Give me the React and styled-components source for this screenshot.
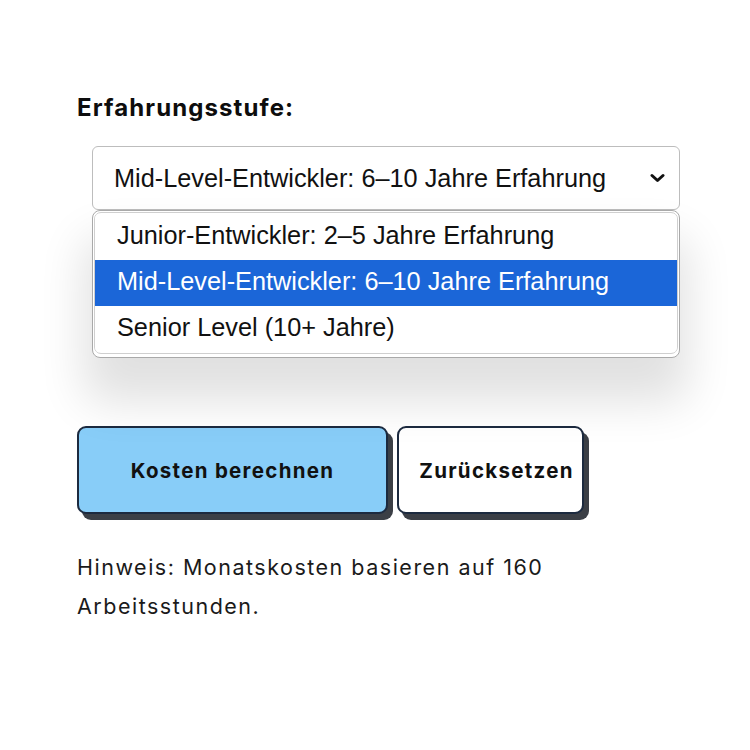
import React from "react";
import styled, { createGlobalStyle } from "styled-components";

const GlobalStyle = createGlobalStyle`
  html, body {
    margin: 0;
    padding: 0;
    background: #ffffff;
  }
  body {
    font-family: Inter, "Noto Sans", sans-serif;
    color: #111111;
  }
`;

const Page = styled.main`
  width: 603px;
  padding: 92px 0 0 77px;
  display: flex;
  flex-direction: column;
`;

const Label = styled.h2`
  margin: 0;
  font-family: Inter, sans-serif;
  font-size: 24px;
  font-weight: 700;
  line-height: 32px;
  letter-spacing: 1.1px;
  color: #0d0d0d;
`;

const Field = styled.div`
  position: relative;
  margin: 22px 0 0 15px;
  width: 588px;
`;

const SelectBox = styled.div`
  box-sizing: border-box;
  height: 64px;
  border: 1px solid #bdbdbd;
  border-radius: 6px;
  background: #ffffff;
  display: flex;
  align-items: center;
  justify-content: space-between;
  padding: 0 14px 0 21px;
  font-family: "Liberation Sans", Arial, sans-serif;
  font-size: 25.3px;
  color: #111111;
`;

const Popup = styled.div`
  position: absolute;
  top: 64px;
  left: 0;
  width: 588px;
  height: 148px;
  box-sizing: border-box;
  border: 1px solid #a9a9a9;
  border-radius: 8px;
  background: #ffffff;
  box-shadow: 0 36px 46px 8px rgba(0, 0, 0, 0.12);
  padding: 1px 1px 3px 1px;
  z-index: 2;
`;

const Menu = styled.ul`
  list-style: none;
  margin: 0;
  padding: 1px 0;
  height: 100%;
  box-sizing: border-box;
  border: 1px solid #cfcfcf;
  border-radius: 7px;
  overflow: hidden;
  display: flex;
  flex-direction: column;
`;

const Option = styled.li`
  height: 46px;
  box-sizing: border-box;
  display: flex;
  align-items: center;
  padding: 0 0 4px 22px;
  font-family: "Liberation Sans", Arial, sans-serif;
  font-size: 25.3px;
  background: ${({ selected }) => (selected ? "#1b66d8" : "#ffffff")};
  color: ${({ selected }) => (selected ? "#ffffff" : "#111111")};
`;

const Actions = styled.div`
  display: flex;
  gap: 9px;
  margin-top: 216px;
`;

const Button = styled.button`
  box-sizing: border-box;
  width: ${({ width }) => width}px;
  height: 88px;
  border: 2px solid #1c2a3f;
  border-radius: 9px;
  background: ${({ primary }) => (primary ? "#88cdf8" : "#ffffff")};
  box-shadow: 5px 6px 0 #3b3f46;
  font-family: Inter, sans-serif;
  font-size: 20.5px;
  font-weight: 700;
  letter-spacing: 1.3px;
  color: #111111;
  padding: 0 0 0 ${({ primary }) => (primary ? 0 : 12)}px;
  cursor: pointer;
`;

const Note = styled.p`
  margin: 34px 0 0;
  font-family: Inter, sans-serif;
  font-size: 21.5px;
  font-weight: 400;
  line-height: 39px;
  letter-spacing: 1.5px;
  color: #1a1a1a;
`;

const Chevron = () => (
  <svg width="15" height="10" viewBox="0 0 15 10">
    <path d="M2 2.5 L7.5 7.5 L13 2.5" fill="none" stroke="#111" strokeWidth="3" strokeLinecap="round" strokeLinejoin="round" />
  </svg>
);

const options = [
  "Junior-Entwickler: 2–5 Jahre Erfahrung",
  "Mid-Level-Entwickler: 6–10 Jahre Erfahrung",
  "Senior Level (10+ Jahre)",
];

export default function App() {
  return (
    <>
      <GlobalStyle />
      <Page>
        <Label>Erfahrungsstufe:</Label>
        <Field>
          <SelectBox>
            <span>{options[1]}</span>
            <Chevron />
          </SelectBox>
          <Popup>
            <Menu>
              {options.map((o, i) => (
                <Option key={o} selected={i === 1}>{o}</Option>
              ))}
            </Menu>
          </Popup>
        </Field>
        <Actions>
          <Button primary width={311}>Kosten berechnen</Button>
          <Button width={187}>Zurücksetzen</Button>
        </Actions>
        <Note>Hinweis: Monatskosten basieren auf 160 Arbeitsstunden.</Note>
      </Page>
    </>
  );
}
